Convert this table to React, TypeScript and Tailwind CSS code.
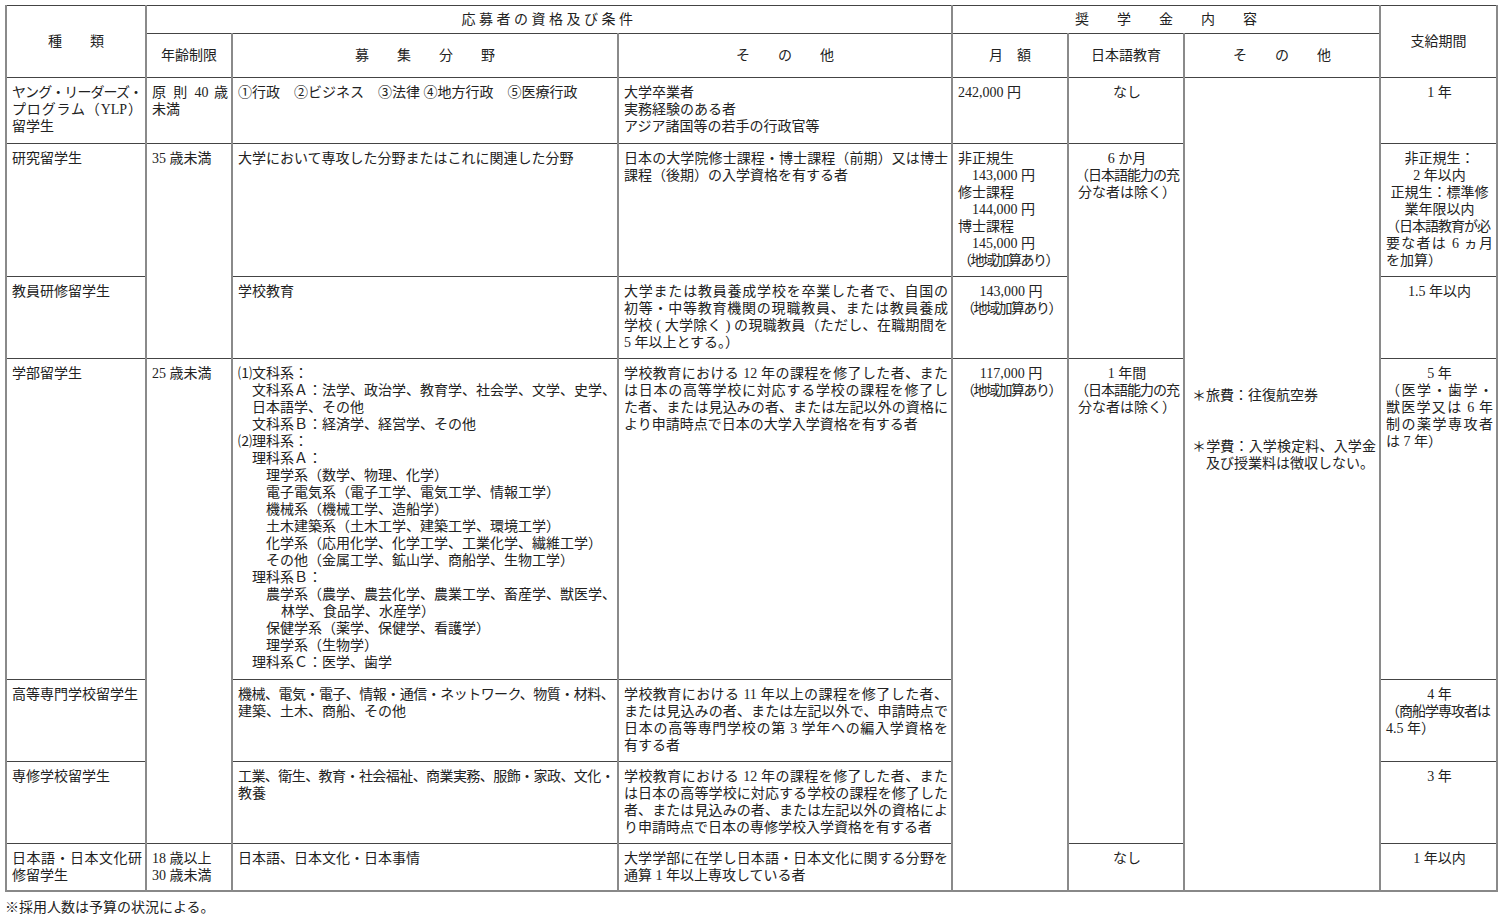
import React from "react";

type LineProps = {
  children?: React.ReactNode;
  j?: boolean; // justify the line to the full cell width
  c?: boolean; // centre the line
  i?: 1 | 2 | 3; // indent in full-width characters
  t?: string; // tracking class
};

const Line: React.FC<LineProps> = ({ children, j, c, i, t }) => {
  const cls = ["block whitespace-nowrap"];
  if (j) cls.push("[text-align-last:justify] text-justify");
  if (c) cls.push("text-center");
  if (i === 1) cls.push("pl-[14px]");
  if (i === 2) cls.push("pl-[28px]");
  if (i === 3) cls.push("pl-[43px]");
  if (t) cls.push(t);
  return <span className={cls.join(" ")}>{children}</span>;
};

const base =
  "border-y border-x-2 border-y-[#444] border-x-[#8a8a8a] align-top pl-[5px] pr-[3px]";
const head =
  "border-y border-x-2 border-y-[#444] border-x-[#8a8a8a] align-middle text-center";

const Td: React.FC<{
  children?: React.ReactNode;
  rowSpan?: number;
  pad?: string;
}> = ({ children, rowSpan, pad = "pt-[6px]" }) => (
  <td rowSpan={rowSpan} className={`${base} ${pad}`}>
    {children}
  </td>
);

export default function App() {
  return (
    <div
      lang="ja"
      className="w-[1500px] h-[918px] bg-white pt-[5px] pl-[5px] text-[14px] leading-[17px] text-[#222] font-['Liberation_Serif','Noto_Sans_CJK_JP',serif]"
    >
      <table className="table-fixed border-collapse w-[1491px] border-b-2 border-b-[#888]">
        <colgroup>
          <col className="w-[140px]" />
          <col className="w-[86px]" />
          <col className="w-[386px]" />
          <col className="w-[334px]" />
          <col className="w-[116px]" />
          <col className="w-[116px]" />
          <col className="w-[196px]" />
          <col className="w-[117px]" />
        </colgroup>
        <thead>
          <tr className="h-[28px]">
            <th rowSpan={2} className={`${head} font-normal`}>
              種　　類
            </th>
            <th colSpan={3} className={`${head} font-normal tracking-[3.5px]`}>
              応募者の資格及び条件
            </th>
            <th colSpan={3} className={`${head} font-normal`}>
              奨　　学　　金　　内　　容
            </th>
            <th rowSpan={2} className={`${head} font-normal`}>
              支給期間
            </th>
          </tr>
          <tr className="h-[44px]">
            <th className={`${head} font-normal`}>年齢制限</th>
            <th className={`${head} font-normal`}>募　　集　　分　　野</th>
            <th className={`${head} font-normal`}>そ　　の　　他</th>
            <th className={`${head} font-normal`}>月　額</th>
            <th className={`${head} font-normal`}>日本語教育</th>
            <th className={`${head} font-normal`}>そ　　の　　他</th>
          </tr>
        </thead>
        <tbody>
          {/* YLP */}
          <tr className="h-[66px]">
            <Td>
              <Line j t="tracking-[-1px]">ヤング・リーダーズ・</Line>
              <Line j>プログラム（YLP）</Line>
              <Line>留学生</Line>
            </Td>
            <Td>
              <Line j>原 則 40 歳</Line>
              <Line>未満</Line>
            </Td>
            <Td>
              <Line>①行政　②ビジネス　③法律 ④地方行政　⑤医療行政</Line>
            </Td>
            <Td>
              <Line>大学卒業者</Line>
              <Line>実務経験のある者</Line>
              <Line>アジア諸国等の若手の行政官等</Line>
            </Td>
            <Td>
              <Line>242,000 円</Line>
            </Td>
            <Td>
              <Line c>なし</Line>
            </Td>
            <Td rowSpan={7} pad="pt-[309px] pl-[7px]">
              <Line>＊旅費：往復航空券</Line>
              <span className="block h-[34px]" />
              <Line j>＊学費：入学検定料、入学金</Line>
              <Line i={1}>及び授業料は徴収しない。</Line>
            </Td>
            <Td>
              <Line c>1 年</Line>
            </Td>
          </tr>

          {/* 研究留学生 */}
          <tr className="h-[133px]">
            <Td>
              <Line>研究留学生</Line>
            </Td>
            <Td rowSpan={2}>
              <Line>35 歳未満</Line>
            </Td>
            <Td>
              <Line>大学において専攻した分野またはこれに関連した分野</Line>
            </Td>
            <Td>
              <Line j>日本の大学院修士課程・博士課程（前期）又は博士</Line>
              <Line>課程（後期）の入学資格を有する者</Line>
            </Td>
            <Td>
              <Line>非正規生</Line>
              <Line i={1}>143,000 円</Line>
              <Line>修士課程</Line>
              <Line i={1}>144,000 円</Line>
              <Line>博士課程</Line>
              <Line i={1}>145,000 円</Line>
              <Line t="tracking-[-1.5px]">（地域加算あり）</Line>
            </Td>
            <Td rowSpan={2}>
              <Line c>6 か月</Line>
              <Line c t="tracking-[-1px]">（日本語能力の充</Line>
              <Line c>分な者は除く）</Line>
            </Td>
            <Td>
              <Line c>非正規生：</Line>
              <Line c>2 年以内</Line>
              <Line c>正規生：標準修</Line>
              <Line c>業年限以内</Line>
              <Line t="tracking-[-1px]">（日本語教育が必</Line>
              <Line j>要な者は 6 ヵ月</Line>
              <Line>を加算）</Line>
            </Td>
          </tr>

          {/* 教員研修留学生 */}
          <tr className="h-[82px]">
            <Td>
              <Line>教員研修留学生</Line>
            </Td>
            <Td>
              <Line>学校教育</Line>
            </Td>
            <Td>
              <Line j>大学または教員養成学校を卒業した者で、自国の</Line>
              <Line j>初等・中等教育機関の現職教員、または教員養成</Line>
              <Line j>学校 ( 大学除く ) の現職教員（ただし、在職期間を</Line>
              <Line>5 年以上とする。）</Line>
            </Td>
            <Td>
              <Line c>143,000 円</Line>
              <Line c t="tracking-[-1.5px]">（地域加算あり）</Line>
            </Td>
            <Td>
              <Line c>1.5 年以内</Line>
            </Td>
          </tr>

          {/* 学部留学生 */}
          <tr className="h-[321px]">
            <Td>
              <Line>学部留学生</Line>
            </Td>
            <Td rowSpan={3}>
              <Line>25 歳未満</Line>
            </Td>
            <Td>
              <Line>⑴文科系：</Line>
              <Line i={1} j>文科系Ａ：法学、政治学、教育学、社会学、文学、史学、</Line>
              <Line i={1}>日本語学、その他</Line>
              <Line i={1}>文科系Ｂ：経済学、経営学、その他</Line>
              <Line>⑵理科系：</Line>
              <Line i={1}>理科系Ａ：</Line>
              <Line i={2}>理学系（数学、物理、化学）</Line>
              <Line i={2}>電子電気系（電子工学、電気工学、情報工学）</Line>
              <Line i={2}>機械系（機械工学、造船学）</Line>
              <Line i={2}>土木建築系（土木工学、建築工学、環境工学）</Line>
              <Line i={2}>化学系（応用化学、化学工学、工業化学、繊維工学）</Line>
              <Line i={2}>その他（金属工学、鉱山学、商船学、生物工学）</Line>
              <Line i={1}>理科系Ｂ：</Line>
              <Line i={2} j>農学系（農学、農芸化学、農業工学、畜産学、獣医学、</Line>
              <Line i={3}>林学、食品学、水産学）</Line>
              <Line i={2}>保健学系（薬学、保健学、看護学）</Line>
              <Line i={2}>理学系（生物学）</Line>
              <Line i={1}>理科系Ｃ：医学、歯学</Line>
            </Td>
            <Td>
              <Line j>学校教育における 12 年の課程を修了した者、また</Line>
              <Line j>は日本の高等学校に対応する学校の課程を修了し</Line>
              <Line j>た者、または見込みの者、または左記以外の資格に</Line>
              <Line>より申請時点で日本の大学入学資格を有する者</Line>
            </Td>
            <Td rowSpan={4}>
              <Line c>117,000 円</Line>
              <Line c t="tracking-[-1.5px]">（地域加算あり）</Line>
            </Td>
            <Td rowSpan={3}>
              <Line c>1 年間</Line>
              <Line c t="tracking-[-1px]">（日本語能力の充</Line>
              <Line c>分な者は除く）</Line>
            </Td>
            <Td>
              <Line c>5 年</Line>
              <Line j>（医学・歯学・</Line>
              <Line j>獣医学又は 6 年</Line>
              <Line j>制の薬学専攻者</Line>
              <Line>は 7 年）</Line>
            </Td>
          </tr>

          {/* 高等専門学校留学生 */}
          <tr className="h-[82px]">
            <Td>
              <Line>高等専門学校留学生</Line>
            </Td>
            <Td>
              <Line j t="tracking-[-0.7px]">
                機械、電気・電子、情報・通信・ネットワーク、物質・材料、
              </Line>
              <Line>建築、土木、商船、その他</Line>
            </Td>
            <Td>
              <Line j>学校教育における 11 年以上の課程を修了した者、</Line>
              <Line j>または見込みの者、または左記以外で、申請時点で</Line>
              <Line j>日本の高等専門学校の第 3 学年への編入学資格を</Line>
              <Line>有する者</Line>
            </Td>
            <Td>
              <Line c>4 年</Line>
              <Line t="tracking-[-1px]">（商船学専攻者は</Line>
              <Line>4.5 年）</Line>
            </Td>
          </tr>

          {/* 専修学校留学生 */}
          <tr className="h-[82px]">
            <Td>
              <Line>専修学校留学生</Line>
            </Td>
            <Td>
              <Line j t="tracking-[-0.7px]">
                工業、衛生、教育・社会福祉、商業実務、服飾・家政、文化・
              </Line>
              <Line>教養</Line>
            </Td>
            <Td>
              <Line j>学校教育における 12 年の課程を修了した者、また</Line>
              <Line j>は日本の高等学校に対応する学校の課程を修了した</Line>
              <Line j>者、または見込みの者、または左記以外の資格によ</Line>
              <Line>り申請時点で日本の専修学校入学資格を有する者</Line>
            </Td>
            <Td>
              <Line c>3 年</Line>
            </Td>
          </tr>

          {/* 日本語・日本文化研修留学生 */}
          <tr className="h-[47px]">
            <Td>
              <Line j>日本語・日本文化研</Line>
              <Line>修留学生</Line>
            </Td>
            <Td>
              <Line>18 歳以上</Line>
              <Line>30 歳未満</Line>
            </Td>
            <Td>
              <Line>日本語、日本文化・日本事情</Line>
            </Td>
            <Td>
              <Line j>大学学部に在学し日本語・日本文化に関する分野を</Line>
              <Line>通算 1 年以上専攻している者</Line>
            </Td>
            <Td>
              <Line c>なし</Line>
            </Td>
            <Td>
              <Line c>1 年以内</Line>
            </Td>
          </tr>
        </tbody>
      </table>
      <p className="pt-[7px]">※採用人数は予算の状況による。</p>
    </div>
  );
}
